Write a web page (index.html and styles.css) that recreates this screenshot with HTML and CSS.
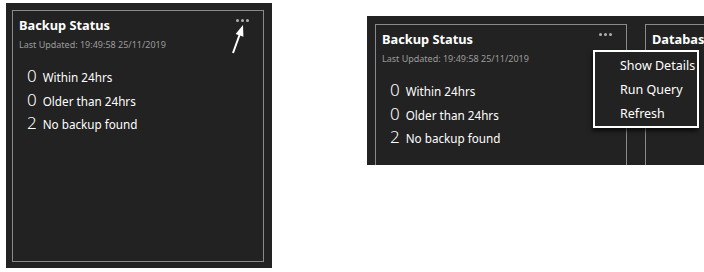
FILE: index.html
```html
<!DOCTYPE html>
<html lang="en">
<head>
    <meta charset="UTF-8">
    <title>Backup Status</title>
    <link rel="stylesheet" href="styles.css">
</head>
<body>
    <div class="panel panel-left">
        <div class="card">
            <div class="card-head">
                <span class="card-title">Backup Status</span>
                <span class="dots"><i></i><i></i><i></i></span>
            </div>
            <p class="updated">Last Updated: 19:49:58 25/11/2019</p>
            <ul class="counts">
                <li><span class="num">0</span>Within 24hrs</li>
                <li><span class="num">0</span>Older than 24hrs</li>
                <li><span class="num">2</span>No backup found</li>
            </ul>
        </div>
        <!-- pointer arrow drawn over the card -->
        <svg class="arrow" width="30" height="40" viewBox="0 0 30 40">
            <line x1="7" y1="33" x2="13.5" y2="15" stroke="#fff" stroke-width="2"/>
            <polygon points="17,5 17.4,16.8 9.6,14" fill="#fff"/>
        </svg>
    </div>

    <div class="panel panel-right">
        <div class="card">
            <div class="card-head">
                <span class="card-title">Backup Status</span>
                <span class="dots"><i></i><i></i><i></i></span>
            </div>
            <p class="updated">Last Updated: 19:49:58 25/11/2019</p>
            <ul class="counts">
                <li><span class="num">0</span>Within 24hrs</li>
                <li><span class="num">0</span>Older than 24hrs</li>
                <li><span class="num">2</span>No backup found</li>
            </ul>
        </div>
        <div class="card">
            <div class="card-head">
                <span class="card-title">Database</span>
            </div>
        </div>
        <ul class="menu">
            <li>Show Details</li>
            <li>Run Query</li>
            <li>Refresh</li>
        </ul>
    </div>
</body>
</html>
```

FILE: styles.css
```css
        body {
            margin: 0;
            background: #fff;
            display: flex;
            align-items: flex-start;
            font-family: 'Noto Sans', 'Open Sans', sans-serif;
            color: #fff;
        }
        .panel {
            position: relative;
            background: #222;
            box-sizing: border-box;
        }
        .panel-left {
            margin: 3px 0 0 6px;
            width: 266px;
            height: 265px;
            padding: 7px 8px 6px 6px;
            display: flex;
        }
        .panel-left .card {
            flex: 1;
        }
        .panel-right {
            margin: 16px 0 0 95px;
            width: 337px;
            height: 149px;
            padding: 8px 0 0 8px;
            display: flex;
            gap: 18px;
            overflow: hidden;
        }
        .panel-right .card {
            flex: none;
            width: 252px;
            height: 200px;
        }
        .card {
            border: 1px solid #8a8a8a;
            box-sizing: border-box;
            padding: 0 14px 0 6px;
        }
        .card-head {
            display: flex;
            justify-content: space-between;
            padding-top: 5px;
        }
        .card-title {
            font-size: 12.8px;
            font-weight: bold;
            line-height: 18px;
            white-space: nowrap;
        }
        .dots {
            display: flex;
            gap: 2px;
            margin-top: 3px;
            height: 3px;
        }
        .dots i {
            width: 3px;
            height: 3px;
            border-radius: 50%;
            background: #b0b0b0;
        }
        .updated {
            margin: 5px 0 0;
            font-size: 9px;
            line-height: 12px;
            color: #9c9c9c;
            white-space: nowrap;
        }
        .counts {
            list-style: none;
            margin: 14px 0 0 8px;
            padding: 0;
        }
        .counts li {
            font-size: 11.7px;
            line-height: 21.5px;
            white-space: nowrap;
        }
        .num {
            font-size: 17px;
            font-weight: 300;
            margin-right: 6px;
        }
        .arrow {
            position: absolute;
            left: 220px;
            top: 17px;
        }
        .menu {
            position: absolute;
            left: 226px;
            top: 34px;
            width: 106px;
            height: 78px;
            box-sizing: border-box;
            margin: 0;
            padding: 2px 0 0 25px;
            list-style: none;
            background: #222;
            border: 2px solid #fff;
            box-shadow: -1px 3px 4px rgba(0, 0, 0, 0.7);
        }
        .menu li {
            font-size: 12.5px;
            line-height: 24px;
            white-space: nowrap;
        }
```
